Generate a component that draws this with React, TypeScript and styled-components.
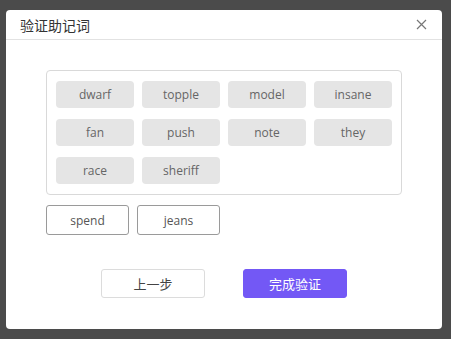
import React from "react";
import styled, { createGlobalStyle } from "styled-components";

const Global = createGlobalStyle`
  html, body { margin: 0; padding: 0; }
  body {
    background: #4b4b4b;
    font-family: "Open Sans", "Noto Sans CJK SC", sans-serif;
    width: 451px;
    height: 339px;
    overflow: hidden;
  }
`;

const Page = styled.div`
  width: 451px;
  height: 339px;
  padding: 10px 9px 10px 6px;
  box-sizing: border-box;
`;

const Modal = styled.div`
  width: 436px;
  height: 319px;
  background: #fff;
  border-radius: 4px;
  display: flex;
  flex-direction: column;
`;

const Header = styled.div`
  height: 29px;
  border-bottom: 1px solid #e2e2e2;
  display: flex;
  align-items: center;
  justify-content: space-between;
  padding: 0 14px 0 14px;
  box-sizing: content-box;
`;

const Title = styled.div`
  font-family: "Noto Sans CJK SC", sans-serif;
  font-size: 14px;
  color: #333;
  line-height: 1;
`;

const Close = styled.button`
  border: none;
  background: none;
  padding: 0;
  width: 14px;
  height: 14px;
  display: flex;
  align-items: center;
  justify-content: center;
  cursor: pointer;
`;

const Body = styled.div`
  padding: 30px 40px 0 40px;
  display: flex;
  flex-direction: column;
`;

const WordBox = styled.div`
  border: 1px solid #d9d9d9;
  border-radius: 4px;
  padding: 10px 10px 9px 9px;
  display: grid;
  grid-template-columns: repeat(4, 78px);
  grid-auto-rows: 27px;
  column-gap: 8px;
  row-gap: 11px;
  box-sizing: border-box;
  height: 125px;
`;

const Chip = styled.div`
  background: #e5e5e5;
  border-radius: 4px;
  font-size: 12px;
  color: #666;
  display: flex;
  align-items: center;
  justify-content: center;
`;

const Picked = styled.div`
  margin-top: 10px;
  display: flex;
  gap: 8px;
`;

const PickedChip = styled.div`
  width: 83px;
  height: 30px;
  box-sizing: border-box;
  border: 1px solid #9a9a9a;
  border-radius: 3px;
  font-size: 12px;
  color: #555;
  display: flex;
  align-items: center;
  justify-content: center;
`;

const Footer = styled.div`
  margin-top: 34px;
  display: flex;
  justify-content: center;
  gap: 38px;
`;

const Btn = styled.button<{ $primary?: boolean }>`
  width: 104px;
  height: 29px;
  border-radius: 3px;
  font-family: "Noto Sans CJK SC", sans-serif;
  font-size: 13px;
  cursor: pointer;
  border: 1px solid ${(p) => (p.$primary ? "#7358f5" : "#dcdcdc")};
  background: ${(p) => (p.$primary ? "#7358f5" : "#fff")};
  color: ${(p) => (p.$primary ? "#fff" : "#444")};
`;

const words = ["dwarf", "topple", "model", "insane", "fan", "push", "note", "they", "race", "sheriff"];
const picked = ["spend", "jeans"];

export default function App() {
  return (
    <>
      <Global />
      <Page>
        <Modal>
          <Header>
            <Title>验证助记词</Title>
            <Close aria-label="close">
              <svg width="11" height="11" viewBox="0 0 11 11">
                <path d="M1 1L10 10M10 1L1 10" stroke="#777" strokeWidth="1.2" />
              </svg>
            </Close>
          </Header>
          <Body>
            <WordBox>
              {words.map((w) => (
                <Chip key={w}>{w}</Chip>
              ))}
            </WordBox>
            <Picked>
              {picked.map((w) => (
                <PickedChip key={w}>{w}</PickedChip>
              ))}
            </Picked>
            <Footer>
              <Btn>上一步</Btn>
              <Btn $primary>完成验证</Btn>
            </Footer>
          </Body>
        </Modal>
      </Page>
    </>
  );
}
